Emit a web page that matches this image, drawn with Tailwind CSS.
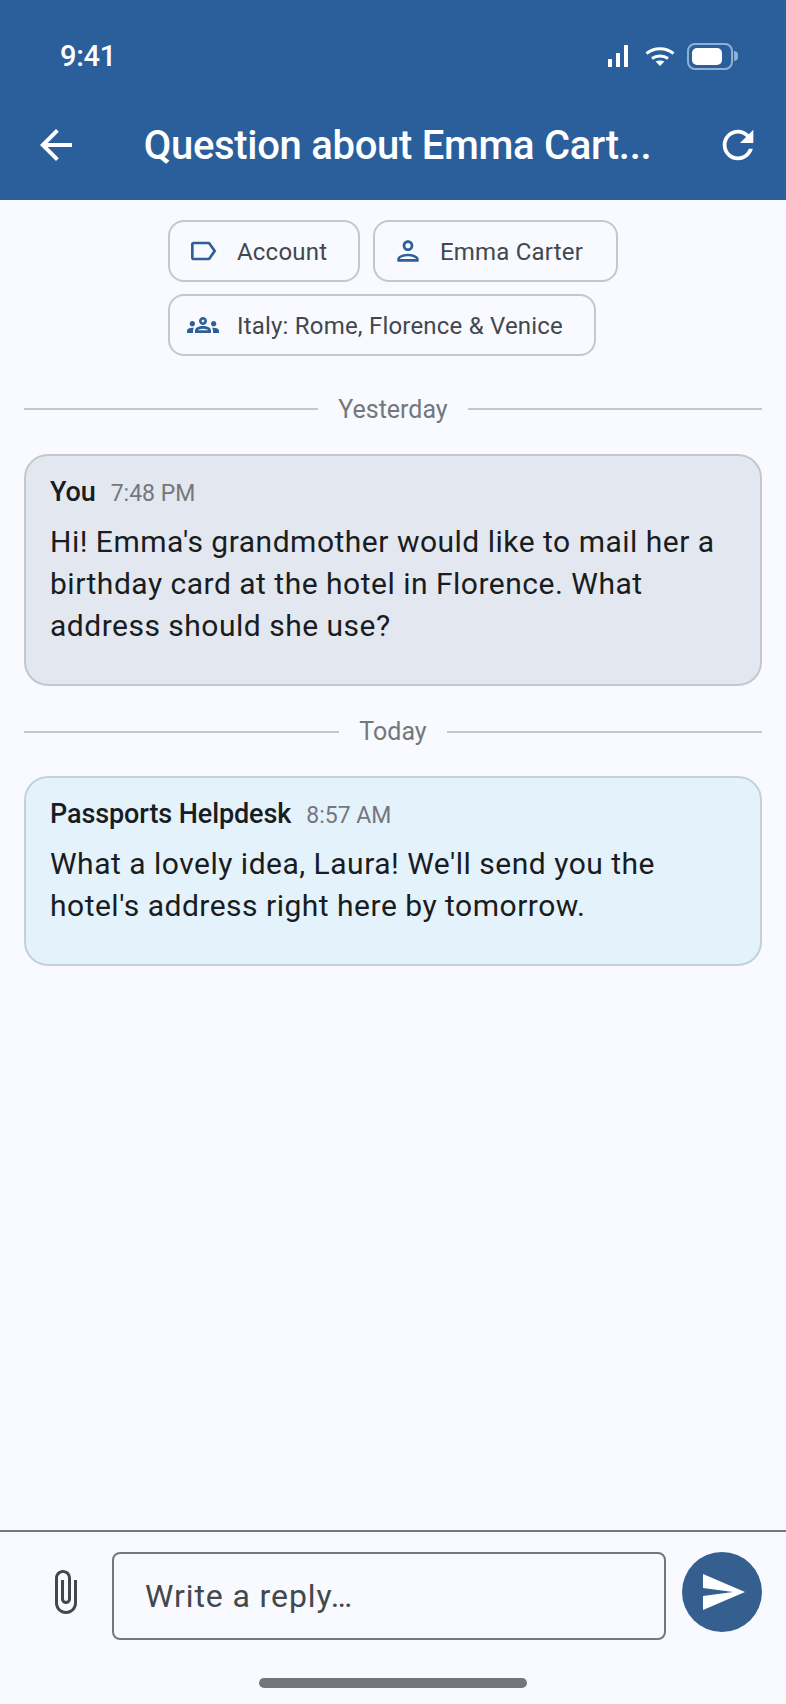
<!DOCTYPE html>
<html lang="en">

<head>
    <meta charset="UTF-8">
    <meta name="viewport" content="width=device-width, initial-scale=1.0">
    <title>Question about Emma Carter</title>
    <script src="https://cdn.jsdelivr.net/npm/@tailwindcss/browser@4"></script>
</head>

<body class="bg-[#f8faff] font-['Roboto',sans-serif]">
    <div class="w-[786px] h-[1704px] flex flex-col overflow-hidden">

        <!-- header -->
        <div class="h-[200px] shrink-0 bg-[#2a5f9b] text-white">
            <div class="h-[115px] pt-[37px] pl-[60px] pr-[48px] flex items-start justify-between">
                <span class="text-[29px] leading-[38px] font-medium tracking-[-0.3px]">9:41</span>
                <div class="flex items-center h-[38px]">
                    <svg width="20" height="22" viewBox="0 0 20 22" fill="#fff"><rect x="0" y="14" width="4" height="8" rx="0.5"/><rect x="8" y="8" width="4" height="14" rx="0.5"/><rect x="16" y="0" width="4" height="22" rx="0.5"/></svg>
                    <svg class="ml-[17px]" width="30" height="20" viewBox="0 0 30 20" fill="none" stroke="#fff" stroke-width="3"><path d="M1.5 7.5C9 1 21 1 28.5 7.5"/><path d="M7 12.5C11.5 9 18.5 9 23 12.5"/><path d="M15 20l-4.4-4.4c2.6-1.6 6.2-1.6 8.8 0z" fill="#fff" stroke="none"/></svg>
                    <div class="ml-[12px] flex items-center gap-[1px]">
                        <div class="w-[46px] h-[27px] rounded-[8px] border-2 border-[#8fb0d6] p-[3px]">
                            <div class="w-[30px] h-full bg-white rounded-[5px]"></div>
                        </div>
                        <div class="w-[4px] h-[10px] bg-[#8fb0d6] rounded-r-sm"></div>
                    </div>
                </div>
            </div>
            <div class="flex items-center pl-[32px] pr-[25px] h-[60px]">
                <svg class="w-[48px] h-[48px] shrink-0" viewBox="0 0 24 24" fill="#fff"><path d="M20 11H7.83l5.59-5.59L12 4l-8 8 8 8 1.41-1.41L7.83 13H20v-2z"/></svg>
                <div class="flex-1 mt-[2px] text-center text-[40px] leading-[44px] font-medium whitespace-nowrap tracking-[-0.3px]">Question about Emma Cart...</div>
                <svg class="w-[46px] h-[46px] shrink-0" viewBox="0 0 24 24" fill="#fff"><path d="M17.65 6.35C16.2 4.9 14.21 4 12 4c-4.42 0-7.99 3.58-7.99 8s3.57 8 7.99 8c3.73 0 6.84-2.55 7.73-6h-2.08c-.82 2.33-3.04 4-5.65 4-3.31 0-6-2.69-6-6s2.69-6 6-6c1.66 0 3.14.69 4.22 1.78L13 11h7V4l-2.35 2.35z"/></svg>
            </div>
        </div>

        <!-- content -->
        <div class="flex-1 px-[24px]">
            <div class="pt-[20px] pl-[144px] flex flex-wrap gap-x-[13px] gap-y-[12px] w-[600px] text-[24px] leading-[32px] tracking-[0.2px] text-[#43474e]">
                <div class="w-[192px] h-[62px] border-2 border-[#c4c7cc] rounded-[16px] flex items-center pl-[17px]">
                    <svg class="w-[32px] h-[32px] shrink-0" viewBox="0 0 24 24" fill="#2f5f94"><path d="M17.63 5.84C17.27 5.33 16.67 5 16 5L5 5.01C3.9 5.01 3 5.9 3 7v10c0 1.1.9 1.99 2 1.99L16 19c.67 0 1.27-.33 1.63-.84L22 12l-4.37-6.16zM16 17H5V7h11l3.55 5L16 17z"/></svg>
                    <span class="ml-[18px] mt-[2px]">Account</span>
                </div>
                <div class="w-[245px] h-[62px] border-2 border-[#c4c7cc] rounded-[16px] flex items-center pl-[17px]">
                    <svg class="w-[32px] h-[32px] shrink-0" viewBox="0 0 24 24" fill="#2f5f94"><path d="M12 6c1.1 0 2 .9 2 2s-.9 2-2 2-2-.9-2-2 .9-2 2-2m0 10c2.7 0 5.8 1.29 6 2H6v-.23c.2-.72 3.3-1.77 6-1.77M12 4C9.79 4 8 5.79 8 8s1.79 4 4 4 4-1.79 4-4-1.79-4-4-4zm0 10c-2.67 0-8 1.34-8 4v2h16v-2c0-2.66-5.33-4-8-4z"/></svg>
                    <span class="ml-[16px] mt-[2px]">Emma Carter</span>
                </div>
                <div class="w-[428px] h-[62px] border-2 border-[#c4c7cc] rounded-[16px] flex items-center pl-[17px]">
                    <svg class="w-[32px] h-[32px] shrink-0" viewBox="0 0 24 24" fill="#2f5f94"><path d="M4,13c1.1,0,2-0.9,2-2c0-1.1-0.9-2-2-2s-2,0.9-2,2C2,12.1,2.9,13,4,13z M5.13,14.1C4.76,14.04,4.39,14,4,14 c-0.99,0-1.93,0.21-2.78,0.58C0.48,14.9,0,15.62,0,16.43V18l4.5,0v-1.61C4.5,15.56,4.73,14.78,5.13,14.1z M20,13c1.1,0,2-0.9,2-2 c0-1.1-0.9-2-2-2s-2,0.9-2,2C18,12.1,18.9,13,20,13z M24,16.43c0-0.81-0.48-1.53-1.22-1.85C21.93,14.21,20.99,14,20,14 c-0.39,0-0.76,0.04-1.13,0.1c0.4,0.68,0.63,1.46,0.63,2.29V18l4.5,0V16.43z M16.24,13.65c-1.17-0.52-2.61-0.9-4.24-0.9 c-1.63,0-3.07,0.39-4.24,0.9C6.68,14.13,6,15.21,6,16.39V18h12v-1.61C18,15.21,17.32,14.13,16.24,13.65z M8.07,16 c0.09-0.23,0.13-0.39,0.91-0.69c0.97-0.38,1.99-0.56,3.02-0.56s2.05,0.18,3.02,0.56c0.77,0.3,0.81,0.46,0.91,0.69H8.07z M12,8 c0.55,0,1,0.45,1,1s-0.45,1-1,1s-1-0.45-1-1S11.45,8,12,8 M12,6c-1.66,0-3,1.34-3,3c0,1.66,1.34,3,3,3s3-1.34,3-3 C15,7.34,13.66,6,12,6L12,6z"/></svg>
                    <span class="ml-[18px] mt-[2px]">Italy: Rome, Florence &amp; Venice</span>
                </div>
            </div>

            <div class="mt-[36px] h-[34px] flex items-center gap-[20px] text-[25px] text-[#74777c]">
                <div class="flex-1 h-[2px] bg-[#c4c7cc]"></div>
                <span class="mt-[2px]">Yesterday</span>
                <div class="flex-1 h-[2px] bg-[#c4c7cc]"></div>
            </div>

            <div class="mt-[28px] h-[232px] bg-[#e2e7f0] border-2 border-[#c4c8ce] rounded-[24px] pt-[16px] px-[24px]">
                <div class="flex items-baseline gap-[15px] h-[36px]">
                    <span class="text-[27px] font-medium tracking-[-0.1px] text-[#191c20]">You</span>
                    <span class="text-[23px] text-[#74777c]">7:48 PM</span>
                </div>
                <p class="mt-[13px] text-[30px] leading-[42px] tracking-[0.5px] text-[#191c20]">Hi! Emma's grandmother would like to mail her a birthday card at the hotel in Florence. What address should she use?</p>
            </div>

            <div class="mt-[29px] h-[34px] flex items-center gap-[20px] text-[25px] text-[#74777c]">
                <div class="flex-1 h-[2px] bg-[#c4c7cc]"></div>
                <span>Today</span>
                <div class="flex-1 h-[2px] bg-[#c4c7cc]"></div>
            </div>

            <div class="mt-[27px] h-[190px] bg-[#e4f2fc] border-2 border-[#c4d0da] rounded-[24px] pt-[16px] px-[24px]">
                <div class="flex items-baseline gap-[15px] h-[36px]">
                    <span class="text-[27px] font-medium tracking-[-0.1px] text-[#191c20]">Passports Helpdesk</span>
                    <span class="text-[23px] text-[#74777c]">8:57 AM</span>
                </div>
                <p class="mt-[13px] text-[30px] leading-[42px] tracking-[0.5px] text-[#191c20]">What a lovely idea, Laura! We'll send you the hotel's address right here by tomorrow.</p>
            </div>
        </div>

        <!-- reply bar -->
        <div class="h-[174px] shrink-0 border-t-2 border-[#74777c]">
            <div class="flex items-start pl-[41px] pt-[20px]">
                <svg class="w-[48px] h-[48px] mt-[16px] shrink-0" viewBox="0 0 24 24" fill="#43474e"><path d="M16.5 6v11.5c0 2.21-1.79 4-4 4s-4-1.79-4-4V5c0-1.38 1.12-2.5 2.5-2.5s2.5 1.12 2.5 2.5v10.5c0 .55-.45 1-1 1s-1-.45-1-1V6H10v9.5c0 1.38 1.12 2.5 2.5 2.5s2.5-1.12 2.5-2.5V5c0-2.21-1.79-4-4-4S7 2.79 7 5v12.5c0 3.04 2.46 5.5 5.5 5.5s5.5-2.46 5.5-5.5V6h-1.5z"/></svg>
                <div class="ml-[23px] w-[554px] h-[88px] border-2 border-[#74777c] rounded-[8px] flex items-center pl-[31px] text-[32px] tracking-[0.9px] text-[#43474e]">Write a reply…</div>
                <div class="ml-[16px] w-[80px] h-[80px] rounded-full bg-[#355f8f] flex items-center justify-center">
                    <svg class="w-[48px] h-[48px] ml-[2px]" viewBox="0 0 24 24" fill="#fff"><path d="M2.01 21L23 12 2.01 3 2 10l15 2-15 2z"/></svg>
                </div>
            </div>
            <div class="mt-[38px] mx-auto w-[268px] h-[10px] rounded-full bg-[#737578]"></div>
        </div>
    </div>
</body>

</html>
